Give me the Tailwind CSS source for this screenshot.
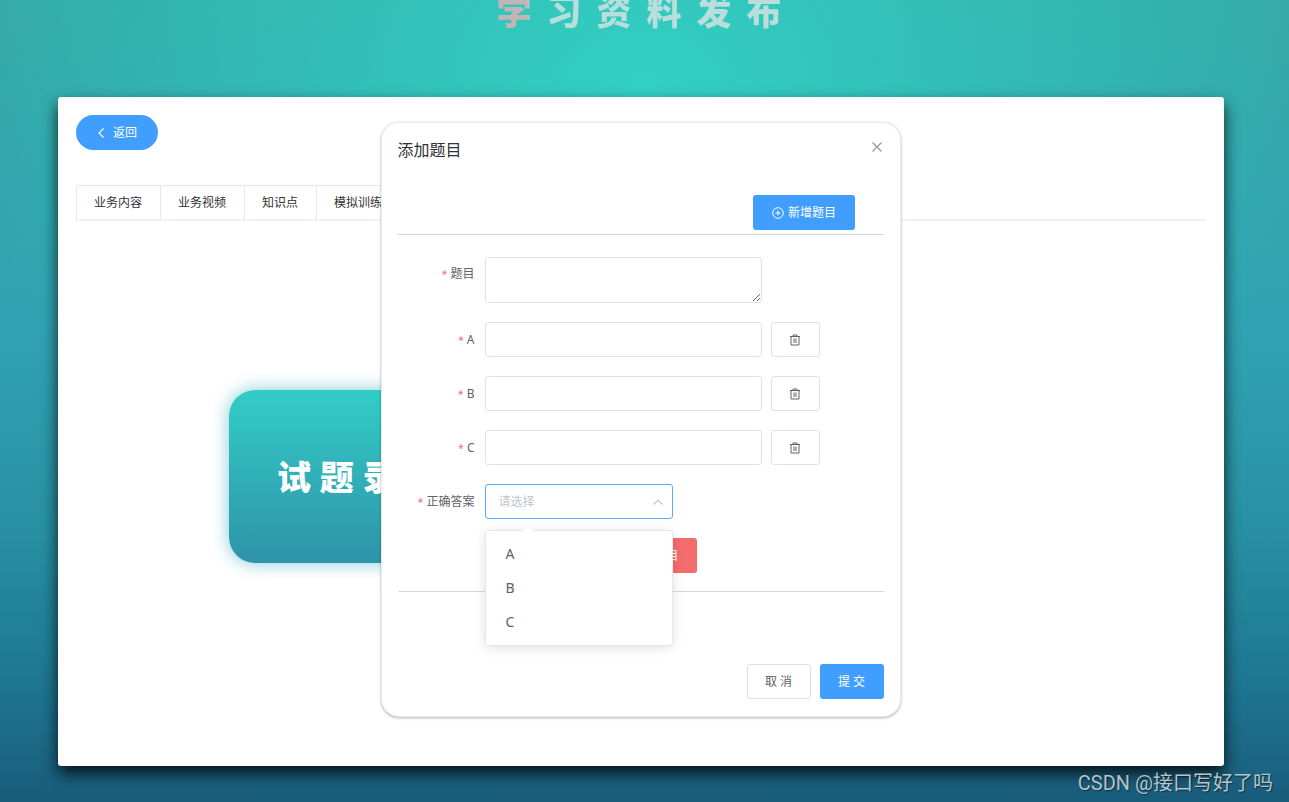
<!DOCTYPE html>
<html lang="zh-CN">
<head>
<meta charset="utf-8">
<meta name="viewport" content="width=device-width, initial-scale=1">
<title>学习资料发布</title>
<script src="https://cdn.jsdelivr.net/npm/@tailwindcss/browser@4"></script>
</head>
<body class="relative flex min-h-screen flex-col overflow-hidden bg-[radial-gradient(ellipse_52%_65%_at_50%_12%,#32d0c4_0%,#32d0c400_100%),linear-gradient(to_bottom,#34aaa6_0%,#30a2b4_42%,#2890a4_66%,#1e7893_84%,#195c7c_100%)] font-['Noto_Sans','Noto_Sans_CJK_SC',sans-serif] text-xs text-[#303133]">
  <header class="flex h-[97px] justify-center pl-1">
    <h1 class="bg-linear-to-r from-[#c5b4b6] from-10% to-[#b9dedb] to-14% bg-clip-text text-[35px] leading-6 font-black tracking-[15px] whitespace-nowrap text-transparent">学习资料发布</h1>
  </header>

  <main class="mr-[65px] mb-9 ml-[58px] flex-1 rounded-[3px] bg-white p-[18px] shadow-[0_8px_16px_0_rgba(0,0,0,0.8)]">
    <button type="button" class="flex h-[35px] w-[82px] items-center justify-center gap-2 rounded-full bg-[#409eff] text-white">
      <svg class="h-3 w-2" viewBox="0 0 8 12" fill="none" stroke="currentColor" stroke-width="1.1"><path d="M6.5 1.5 2 6l4.5 4.5"/></svg>
      <span>返回</span>
    </button>

    <nav class="mt-[35px] flex h-9 border-b-2 border-[#f1f2f6]">
      <div class="flex divide-x divide-[#e4e7ed] rounded-t border border-b-0 border-[#e4e7ed] leading-[34px] whitespace-nowrap">
        <a href="#" class="pr-[18px] pl-[17px]">业务内容</a>
        <a href="#" class="pr-[18px] pl-[17px]">业务视频</a>
        <a href="#" class="pr-[18px] pl-[17px]">知识点</a>
        <a href="#" class="pr-[18px] pl-[17px]">模拟训练</a>
      </div>
    </nav>

    <button type="button" class="mt-[169px] ml-[153px] h-[173px] w-[260px] rounded-[26px] bg-linear-to-b from-[#32cdc7] to-[#2e93a9] pt-[2px] pl-12 text-left text-[34px] font-black whitespace-nowrap text-white shadow-[0_0_18px_rgba(46,170,190,0.6)]">试 题 录</button>
  </main>

  <section role="dialog" aria-labelledby="dialog-title" class="absolute top-[122px] left-1/2 w-[520px] -translate-x-[264px] rounded-[18px] border border-[#ebebed] bg-white px-4 pb-[17px] shadow-[0_1px_3px_rgba(0,0,0,0.3)]">
    <div class="flex h-[72px] items-start justify-between">
      <h2 id="dialog-title" class="mt-[15px] text-base leading-6">添加题目</h2>
      <button type="button" aria-label="关闭" class="mt-[18px] flex w-[14px] justify-center text-[#909399]">
        <svg class="h-3 w-3" viewBox="0 0 12 12" fill="none" stroke="currentColor" stroke-width="1.1"><path d="m1.5 1.5 9 9m0-9-9 9"/></svg>
      </button>
    </div>

    <div class="flex h-10 items-start justify-end border-b border-[#d8d8da] pr-[29px]">
      <button type="button" class="flex h-[35px] w-[102px] items-center justify-center gap-1 rounded-[3px] bg-[#409eff] pl-px text-white">
        <svg class="h-3 w-3" viewBox="0 0 12 12" fill="none" stroke="currentColor"><circle cx="6" cy="6" r="5.3"/><path d="M6 3.5v5M3.5 6h5"/></svg>
        <span>新增题目</span>
      </button>
    </div>

    <form class="flex flex-col gap-[19px] border-b border-[#d8d8da] pt-[22px] pb-[18px] text-[#606266]">
      <div class="flex items-start gap-[10px]">
        <label for="question" class="h-[34px] w-[77px] text-right leading-[34px]"><span class="text-[10px] leading-none text-[#f56c6c]">*</span> 题目</label>
        <textarea id="question" class="block h-[46px] w-[277px] resize-y rounded-[3px] border border-[#dfe2e8] px-3 outline-none"></textarea>
      </div>
      <div class="flex items-center gap-[10px]">
        <label for="option-a" class="h-[35px] w-[77px] text-right leading-[35px]"><span class="text-[10px] leading-none text-[#f56c6c]">*</span> A</label>
        <input id="option-a" type="text" class="h-[35px] w-[277px] rounded-[3px] border border-[#dfe2e8] px-3 outline-none">
        <button type="button" aria-label="删除选项A" class="-ml-px flex h-[35px] w-[49px] items-center justify-center rounded-[3px] border border-[#dfe2e8]">
          <svg class="h-3 w-3" viewBox="0 0 12 12" fill="none" stroke="currentColor"><path d="M1 2.5h10M2 2.5V11h8V2.5M4 2.5V1h4v1.5M5 4.500V9M7 4.500V9"/></svg>
        </button>
      </div>
      <div class="flex items-center gap-[10px]">
        <label for="option-b" class="h-[35px] w-[77px] text-right leading-[35px]"><span class="text-[10px] leading-none text-[#f56c6c]">*</span> B</label>
        <input id="option-b" type="text" class="h-[35px] w-[277px] rounded-[3px] border border-[#dfe2e8] px-3 outline-none">
        <button type="button" aria-label="删除选项B" class="-ml-px flex h-[35px] w-[49px] items-center justify-center rounded-[3px] border border-[#dfe2e8]">
          <svg class="h-3 w-3" viewBox="0 0 12 12" fill="none" stroke="currentColor"><path d="M1 2.5h10M2 2.5V11h8V2.5M4 2.5V1h4v1.5M5 4.500V9M7 4.500V9"/></svg>
        </button>
      </div>
      <div class="flex items-center gap-[10px]">
        <label for="option-c" class="h-[35px] w-[77px] text-right leading-[35px]"><span class="text-[10px] leading-none text-[#f56c6c]">*</span> C</label>
        <input id="option-c" type="text" class="h-[35px] w-[277px] rounded-[3px] border border-[#dfe2e8] px-3 outline-none">
        <button type="button" aria-label="删除选项C" class="-ml-px flex h-[35px] w-[49px] items-center justify-center rounded-[3px] border border-[#dfe2e8]">
          <svg class="h-3 w-3" viewBox="0 0 12 12" fill="none" stroke="currentColor"><path d="M1 2.5h10M2 2.5V11h8V2.5M4 2.5V1h4v1.5M5 4.500V9M7 4.500V9"/></svg>
        </button>
      </div>
      <div class="flex items-center gap-[10px]">
        <label for="answer" class="h-[35px] w-[77px] text-right leading-[35px]"><span class="text-[10px] leading-none text-[#f56c6c]">*</span> 正确答案</label>
        <div class="relative w-[188px]">
          <select id="answer" class="block h-[35px] w-full appearance-none rounded-[3px] border border-[#5aabff] bg-white px-[13px] text-[#c0c4cc] outline-none">
            <option>请选择</option>
          </select>
          <svg class="absolute top-3 right-[9px] h-3 w-3 text-[#c0c4cc]" viewBox="0 0 12 12" fill="none" stroke="currentColor" stroke-width="1.1"><path d="M1.5 8.5 6 4l4.5 4.5"/></svg>
          <ul role="listbox" aria-label="正确答案" class="absolute top-[46px] left-0 z-10 w-full rounded-[3px] border border-[#e4e7ed] bg-white px-5 py-[6px] text-sm leading-[34px] shadow-[0_2px_12px_rgba(0,0,0,0.12)]">
            <li aria-hidden="true" class="absolute -top-[6px] left-9">
              <svg class="block h-[6px] w-3" viewBox="0 0 12 6"><path d="M0 6 6 0l6 6z" fill="#fff"/><path d="M1 5 6 0l5 5" fill="none" stroke="#f0f1f4"/></svg>
            </li>
            <li role="option">A</li>
            <li role="option">B</li>
            <li role="option">C</li>
          </ul>
        </div>
      </div>
      <div class="flex justify-center pl-[10px]">
        <button type="button" class="h-[35px] w-[102px] rounded-[3px] bg-[#f56c6c] pr-[18px] text-right text-white">删除题目</button>
      </div>
    </form>

    <div class="mt-[72px] flex justify-end gap-[9px]">
      <button type="button" class="h-[35px] w-16 rounded-[3px] border border-[#dcdfe6] text-[#606266]">取 消</button>
      <button type="button" class="h-[35px] w-16 rounded-[3px] bg-[#409eff] text-white">提 交</button>
    </div>
  </section>

  <p class="absolute right-4 bottom-[7px] font-[Roboto,'Noto_Sans_CJK_SC',sans-serif] text-xl leading-6 text-[#b5c3ca] [text-shadow:1px_1px_1px_rgba(0,0,0,0.5)]">CSDN @接口写好了吗</p>
</body>
</html>
